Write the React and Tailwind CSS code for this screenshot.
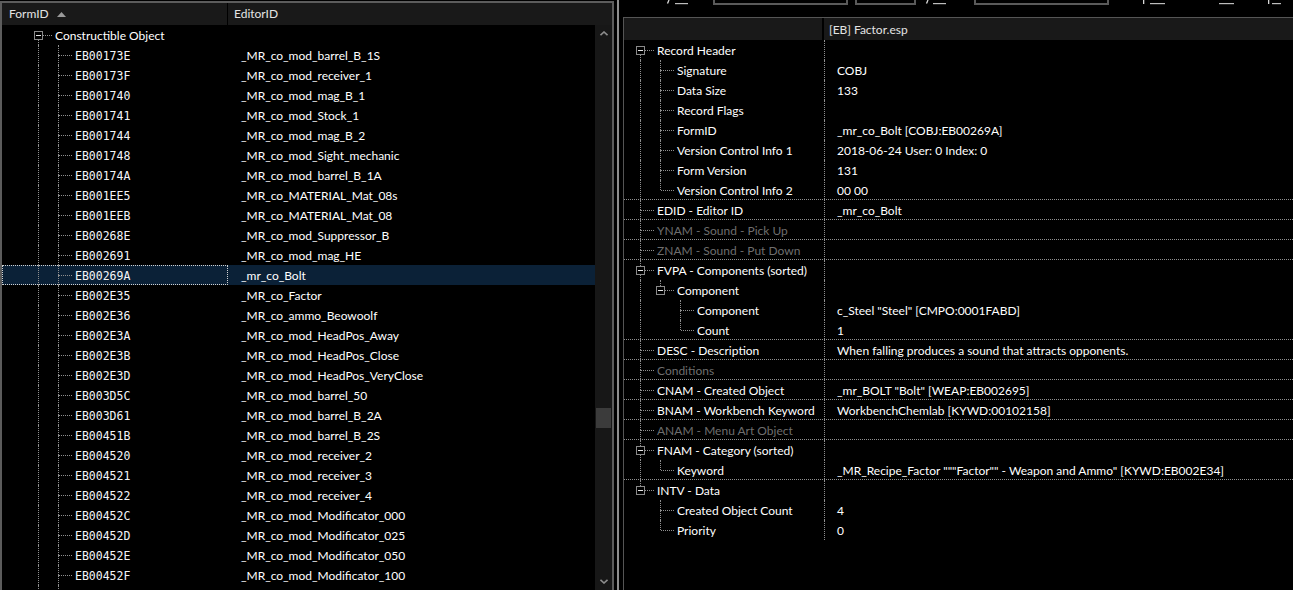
import React from 'react';

const LINE = 'border-dotted border-[#8f8f8f]';

const forms = [
  ['EB00173E', '_MR_co_mod_barrel_B_1S'],
  ['EB00173F', '_MR_co_mod_receiver_1'],
  ['EB001740', '_MR_co_mod_mag_B_1'],
  ['EB001741', '_MR_co_mod_Stock_1'],
  ['EB001744', '_MR_co_mod_mag_B_2'],
  ['EB001748', '_MR_co_mod_Sight_mechanic'],
  ['EB00174A', '_MR_co_mod_barrel_B_1A'],
  ['EB001EE5', '_MR_co_MATERIAL_Mat_08s'],
  ['EB001EEB', '_MR_co_MATERIAL_Mat_08'],
  ['EB00268E', '_MR_co_mod_Suppressor_B'],
  ['EB002691', '_MR_co_mod_mag_HE'],
  ['EB00269A', '_mr_co_Bolt'],
  ['EB002E35', '_MR_co_Factor'],
  ['EB002E36', '_MR_co_ammo_Beowoolf'],
  ['EB002E3A', '_MR_co_mod_HeadPos_Away'],
  ['EB002E3B', '_MR_co_mod_HeadPos_Close'],
  ['EB002E3D', '_MR_co_mod_HeadPos_VeryClose'],
  ['EB003D5C', '_MR_co_mod_barrel_50'],
  ['EB003D61', '_MR_co_mod_barrel_B_2A'],
  ['EB00451B', '_MR_co_mod_barrel_B_2S'],
  ['EB004520', '_MR_co_mod_receiver_2'],
  ['EB004521', '_MR_co_mod_receiver_3'],
  ['EB004522', '_MR_co_mod_receiver_4'],
  ['EB00452C', '_MR_co_mod_Modificator_000'],
  ['EB00452D', '_MR_co_mod_Modificator_025'],
  ['EB00452E', '_MR_co_mod_Modificator_050'],
  ['EB00452F', '_MR_co_mod_Modificator_100'],
  ['', ''],
];

// record view rows: lv = depth, g = ancestor guide lines, box = expander
const fields = [
  { label: 'Record Header', lv: 0, box: true, above: false, below: true, g: [] },
  { label: 'Signature', value: 'COBJ', lv: 1, below: true, g: [true] },
  { label: 'Data Size', value: '133', lv: 1, below: true, g: [true] },
  { label: 'Record Flags', value: '', lv: 1, below: true, g: [true] },
  { label: 'FormID', value: '_mr_co_Bolt [COBJ:EB00269A]', lv: 1, below: true, g: [true] },
  { label: 'Version Control Info 1', value: '2018-06-24 User: 0 Index: 0', lv: 1, below: true, g: [true] },
  { label: 'Form Version', value: '131', lv: 1, below: true, g: [true] },
  { label: 'Version Control Info 2', value: '00 00', lv: 1, below: false, g: [true], end: true },
  { label: 'EDID - Editor ID', value: '_mr_co_Bolt', lv: 0, below: true, g: [], end: true },
  { label: 'YNAM - Sound - Pick Up', lv: 0, below: true, g: [], end: true, dim: true },
  { label: 'ZNAM - Sound - Put Down', lv: 0, below: true, g: [], end: true, dim: true },
  { label: 'FVPA - Components (sorted)', lv: 0, box: true, above: true, below: true, g: [] },
  { label: 'Component', lv: 1, box: true, above: true, below: false, g: [true] },
  { label: 'Component', value: 'c_Steel "Steel" [CMPO:0001FABD]', lv: 2, below: true, g: [true, false] },
  { label: 'Count', value: '1', lv: 2, below: false, g: [true, false], end: true },
  { label: 'DESC - Description', value: 'When falling produces a sound that attracts opponents.', lv: 0, below: true, g: [], end: true },
  { label: 'Conditions', lv: 0, below: true, g: [], end: true, dim: true },
  { label: 'CNAM - Created Object', value: '_mr_BOLT "Bolt" [WEAP:EB002695]', lv: 0, below: true, g: [], end: true },
  { label: 'BNAM - Workbench Keyword', value: 'WorkbenchChemlab [KYWD:00102158]', lv: 0, below: true, g: [], end: true },
  { label: 'ANAM - Menu Art Object', lv: 0, below: true, g: [], end: true, dim: true },
  { label: 'FNAM - Category (sorted)', lv: 0, box: true, above: true, below: true, g: [] },
  { label: 'Keyword', value: '_MR_Recipe_Factor """Factor"" - Weapon and Ammo" [KYWD:EB002E34]', lv: 1, below: false, g: [true], end: true },
  { label: 'INTV - Data', lv: 0, box: true, above: true, below: false, g: [] },
  { label: 'Created Object Count', value: '4', lv: 1, below: true, g: [false] },
  { label: 'Priority', value: '0', lv: 1, below: false, g: [false] },
];

function Connector({ box, above = true, below, g, spacer, boxSpacer }) {
  return (
    <>
      <div className={`shrink-0 ${box && g.length === 0 ? boxSpacer : spacer}`} />
      {g.map((on, i) => (
        <div
          key={i}
          className={`shrink-0 ${box && i === g.length - 1 ? 'w-4' : 'w-5'} ${on ? `border-l ${LINE}` : ''}`}
        />
      ))}
      {box ? (
        <>
          <div className="flex w-[9px] shrink-0 flex-col">
            <div className={`ml-[4px] h-[6px] ${above ? `border-l ${LINE}` : ''}`} />
            <div className="flex h-[9px] w-[9px] items-center justify-center border border-[#8a8a8a] bg-black">
              <div className="h-px w-[5px] bg-[#e6e6e6]" />
            </div>
            <div className={`ml-[4px] flex-1 ${below ? `border-l ${LINE}` : ''}`} />
          </div>
          <div className={`mt-[10px] h-0 w-[9px] shrink-0 self-start border-t ${LINE}`} />
        </>
      ) : (
        <>
          <div className="flex w-px shrink-0 flex-col">
            <div className={`h-[10px] border-l ${LINE}`} />
            <div className={`flex-1 ${below ? `border-l ${LINE}` : ''}`} />
          </div>
          <div className={`mt-[10px] h-0 w-[13px] shrink-0 self-start border-t ${LINE}`} />
        </>
      )}
    </>
  );
}

function Chevron({ down }) {
  return (
    <svg width="8" height="5" viewBox="0 0 8 5" className="block">
      <polyline
        points={down ? '0.5,0.8 4,4 7.5,0.8' : '0.5,4.2 4,1 7.5,4.2'}
        fill="none"
        stroke="#8c8c8c"
        strokeWidth="1.6"
      />
    </svg>
  );
}

function FormList() {
  return (
    <div className="mt-px flex w-[614px] shrink-0 flex-col border-x-2 border-t-2 border-[#5c5c5c]">
      <div className="flex h-[22px] shrink-0 bg-[#191919] text-[12px] text-[#e4e4e4]">
        <div className="flex w-[226px] shrink-0 items-center border-r border-black pl-[7px]">
          FormID
          <svg width="9" height="5" viewBox="0 0 9 5" className="ml-[8px]">
            <polygon points="0,5 4.5,0 9,5" fill="#9a9a9a" />
          </svg>
        </div>
        <div className="flex items-center pl-[6px]">EditorID</div>
      </div>
      <div className="flex min-h-0 flex-1">
        <div className="min-w-0 flex-1 overflow-hidden">
          <div className="flex h-5">
            <div className="flex w-[226px] shrink-0">
              <Connector box above={false} below g={[]} spacer="w-9" boxSpacer="w-8" />
              <span className="ml-[3px] pt-px text-[12px] leading-5 whitespace-nowrap text-white">Constructible Object</span>
            </div>
          </div>
          {forms.map(([id, editor], i) => {
            const sel = id === 'EB00269A';
            return (
              <div key={i} className={`flex h-5 ${sel ? 'bg-[#0b2137]' : ''}`}>
                <div
                  className={`flex w-[226px] shrink-0 ${sel ? 'outline-1 -outline-offset-1 outline-dotted outline-[#d2d2d2]' : ''}`}
                >
                  <Connector below g={[true]} spacer="w-9" boxSpacer="w-8" />
                  <span className="ml-[3px] pt-px font-['DejaVu_Sans_Mono',monospace] text-[11.5px] leading-5 whitespace-nowrap text-[#f4f6fa]">
                    {id}
                  </span>
                </div>
                <div className="pt-px pl-[13px] text-[12px] leading-5 whitespace-nowrap text-white">{editor}</div>
              </div>
            );
          })}
        </div>
        <div className="flex w-[17px] shrink-0 flex-col bg-[#171717]">
          <div className="flex h-[17px] items-center justify-center">
            <Chevron />
          </div>
          <div className="h-[366px]" />
          <div className="mx-px h-5 bg-[#3b3b3b]" />
          <div className="flex-1" />
          <div className="flex h-[17px] items-start justify-center pt-[6px]">
            <Chevron down />
          </div>
        </div>
      </div>
    </div>
  );
}

function Toolbar() {
  const frame = 'h-[5px] shrink-0 border-x-2 border-b-2 border-[#5a5a5a]';
  return (
    <div className="flex h-[17px] shrink-0 items-start">
      <svg width="24" height="5" className="ml-[43px] shrink-0">
        <path d="M3 0 L1.5 3.5" stroke="#d8d8d8" strokeWidth="1.3" />
        <rect x="9" y="3" width="13" height="1.2" fill="#bdbdbd" />
      </svg>
      <div className={`ml-[23px] w-[135px] ${frame}`} />
      <div className={`ml-[7px] w-[61px] ${frame}`} />
      <svg width="22" height="5" className="ml-[9px] shrink-0">
        <path d="M3 0 L1.5 3.5" stroke="#d8d8d8" strokeWidth="1.3" />
        <rect x="8" y="3" width="13" height="1.2" fill="#bdbdbd" />
      </svg>
      <div className={`ml-[27px] w-[135px] ${frame}`} />
      <svg width="27" height="5" className="ml-[30px] shrink-0">
        <rect x="4" y="0" width="1.3" height="4" fill="#d8d8d8" />
        <rect x="11" y="3" width="15" height="1.2" fill="#bdbdbd" />
      </svg>
      <svg width="15" height="5" className="ml-[53px] shrink-0">
        <rect x="0" y="3" width="15" height="1.2" fill="#bdbdbd" />
      </svg>
      <svg width="15" height="5" className="ml-[32px] shrink-0">
        <rect x="2" y="0" width="1.3" height="4" fill="#d8d8d8" />
        <rect x="6" y="3" width="9" height="1.2" fill="#bdbdbd" />
      </svg>
    </div>
  );
}

function RecordView() {
  return (
    <div className="flex min-w-0 flex-1 flex-col">
      <Toolbar />
      <div className="flex min-h-0 flex-1 flex-col border-t border-l border-[#555]">
        <div className="flex h-[22px] shrink-0 bg-[#191919] text-[12px] text-[#e4e4e4]">
          <div className="w-[200px] shrink-0 border-r-2 border-black" />
          <div className="flex items-center pt-px pl-[5px]">[EB] Factor.esp</div>
        </div>
        <div className="text-[12px]">
          {fields.map((f, i) => (
            <div key={i} className={`flex h-5 ${f.end ? `border-b ${LINE}` : ''}`}>
              <div className={`flex w-[201px] shrink-0 border-r ${LINE}`}>
                <Connector box={f.box} above={f.above} below={f.below} g={f.g} spacer="w-4" boxSpacer="w-3" />
                <span className={`ml-[3px] pt-px leading-5 whitespace-nowrap ${f.dim ? 'text-[#6e6e6e]' : 'text-white'}`}>
                  {f.label}
                </span>
              </div>
              <div className="pt-px pl-3 leading-5 whitespace-nowrap text-white">{f.value}</div>
            </div>
          ))}
        </div>
      </div>
    </div>
  );
}

export default function App() {
  return (
    <div className="flex h-[590px] w-[1293px] overflow-hidden bg-black font-['Lato',sans-serif]">
      <FormList />
      <div className="flex w-[9px] shrink-0 pl-[3px]">
        <div className="w-[2px] bg-[#8e8e8e]" />
      </div>
      <RecordView />
    </div>
  );
}
